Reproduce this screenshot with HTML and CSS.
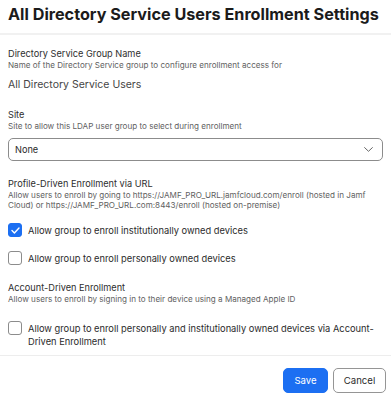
FILE: index.html
```html
<!DOCTYPE html>
<html lang="en">
<head>
    <meta charset="UTF-8">
    <meta name="viewport" content="width=device-width, initial-scale=1.0">
    <title>All Directory Service Users Enrollment Settings</title>
    <link rel="stylesheet" href="styles.css">
</head>
<body>
    <div class="modal">
        <!-- Header -->
        <div class="modal-header">
            <h1 class="modal-title">All Directory Service Users Enrollment Settings</h1>
        </div>

        <div class="modal-body">
            <div class="field">
                <span class="field-label">Directory Service Group Name</span>
                <span class="field-help">Name of the Directory Service group to configure enrollment access for</span>
                <span class="field-value">All Directory Service Users</span>
            </div>

            <div class="field">
                <span class="field-label">Site</span>
                <span class="field-help">Site to allow this LDAP user group to select during enrollment</span>
                <div class="select">
                    <span>None</span>
                    <svg class="select-chevron" width="9" height="5" viewBox="0 0 9 5">
                        <path d="M0.6 0.6l3.9 3.7 3.9-3.7" fill="none" stroke="#666" stroke-width="1" stroke-linecap="round" stroke-linejoin="round"/>
                    </svg>
                </div>
            </div>

            <div class="field">
                <span class="field-label">Profile-Driven Enrollment via URL</span>
                <span class="field-help">Allow users to enroll by going to https://JAMF_PRO_URL.jamfcloud.com/enroll (hosted in Jamf Cloud) or https://JAMF_PRO_URL.com:8443/enroll (hosted on-premise)</span>
                <div class="checks">
                    <label class="check">
                        <span class="check-box checked">
                            <svg width="9" height="7" viewBox="0 0 9 7">
                                <path d="M1 3.6l2.4 2.3L8 1.1" fill="none" stroke="#fff" stroke-width="1.4" stroke-linecap="round" stroke-linejoin="round"/>
                            </svg>
                        </span>
                        <span class="check-text">Allow group to enroll institutionally owned devices</span>
                    </label>
                    <label class="check">
                        <span class="check-box"></span>
                        <span class="check-text">Allow group to enroll personally owned devices</span>
                    </label>
                </div>
            </div>

            <div class="field">
                <span class="field-label">Account-Driven Enrollment</span>
                <span class="field-help">Allow users to enroll by signing in to their device using a Managed Apple ID</span>
                <div class="checks checks-wide">
                    <label class="check">
                        <span class="check-box"></span>
                        <span class="check-text">Allow group to enroll personally and institutionally owned devices via Account-Driven Enrollment</span>
                    </label>
                </div>
            </div>
        </div>

        <!-- Footer -->
        <div class="modal-footer">
            <button class="btn btn-primary">Save</button>
            <button class="btn btn-secondary">Cancel</button>
        </div>
    </div>
</body>
</html>
```

FILE: styles.css
```css
body {
    margin: 0;
    background: white;
    font-family: Inter, "Liberation Sans", sans-serif;
    color: #2b2b2b;
}

.modal {
    width: 391px;
    height: 400px;
    display: flex;
    flex-direction: column;
    overflow: hidden;
}

.modal-header {
    height: 33px;
    padding: 0 8px;
    border-bottom: 2px solid #f1f1f1;
}

.modal-title {
    margin: 0;
    font-size: 16.2px;
    line-height: 29px;
    font-weight: 700;
    color: #1b1b1b;
    white-space: nowrap;
}

.modal-body {
    padding: 13px 8px 0;
    display: flex;
    flex-direction: column;
    gap: 17px;
}

.field {
    display: flex;
    flex-direction: column;
}

.field-label {
    font-size: 9.2px;
    line-height: 12px;
    color: #2e2e2e;
}

.field-help {
    font-size: 8.1px;
    line-height: 9.5px;
    padding-top: 1px;
    color: #5f5f5f;
}

.field-value {
    margin-top: 7px;
    font-size: 10.5px;
    line-height: 14px;
    color: #454545;
}

.select {
    margin-top: 7px;
    height: 21px;
    border: 1px solid #8c8c8c;
    border-radius: 5px;
    display: flex;
    align-items: center;
    justify-content: space-between;
    padding: 0 9px 0 6px;
    font-size: 9.2px;
    color: #2b2b2b;
}

.checks {
    margin-top: 13px;
    display: flex;
    flex-direction: column;
    gap: 14px;
}

.checks-wide {
    margin-top: 16px;
}

.check {
    display: flex;
    align-items: flex-start;
    gap: 6px;
}

.check-box {
    flex: none;
    width: 12px;
    height: 12px;
    border: 1px solid #8c8c8c;
    border-radius: 3px;
    display: flex;
    align-items: center;
    justify-content: center;
    background: white;
}

.check-box.checked {
    background: #1c6ff2;
    border-color: #1c6ff2;
}

.check-text {
    font-size: 9.3px;
    line-height: 13px;
    padding-top: 1px;
    color: #2b2b2b;
}

.modal-footer {
    margin-top: auto;
    border-top: 1px solid #ededed;
    padding: 12px 5px 7px;
    display: flex;
    justify-content: flex-end;
    gap: 5px;
}

.btn {
    height: 25px;
    border-radius: 5px;
    font-family: inherit;
    font-size: 9.6px;
    padding: 0;
    cursor: pointer;
}

.btn-primary {
    background: #1c6ff2;
    border: 1px solid #1c6ff2;
    color: white;
    width: 45px;
}

.btn-secondary {
    background: white;
    border: 1px solid #959595;
    color: #2b2b2b;
    width: 53px;
}
```
